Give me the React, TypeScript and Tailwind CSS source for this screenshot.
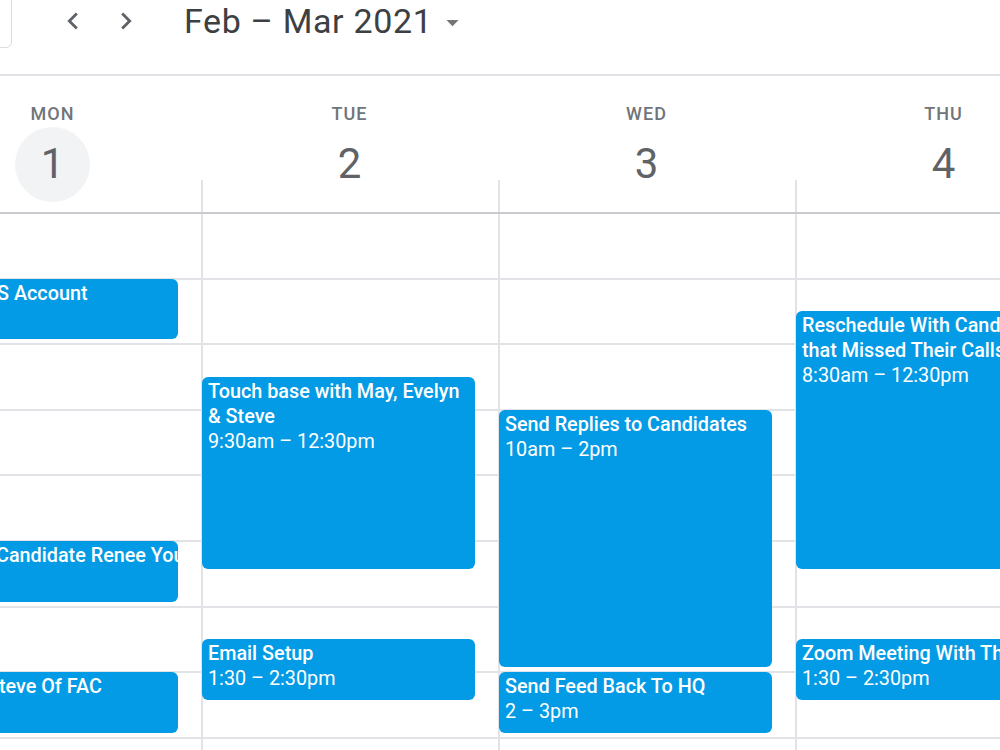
import React from "react";

type CalEvent = {
  title: string;
  time?: string;
  start: number;
  end: number;
  // Monday is cut off by the window, so its text is shifted to show the tail only
  indent?: string;
};

const HOUR = 65.6;
const FIRST_HOUR = 7;
const HOURS = 9;

const days: { label: string; date: number; today?: boolean; events: CalEvent[] }[] = [
  {
    label: "MON",
    date: 1,
    today: true,
    events: [
      { title: "S Account", start: 8, end: 9, indent: "pl-[92px]" },
      { title: "Candidate Renee Young", start: 12, end: 13, indent: "pl-[91px]" },
      { title: "Steve Of FAC", start: 14, end: 15, indent: "pl-[82px]" },
    ],
  },
  {
    label: "TUE",
    date: 2,
    events: [
      { title: "Touch base with May, Evelyn & Steve", time: "9:30am – 12:30pm", start: 9.5, end: 12.5 },
      { title: "Email Setup", time: "1:30 – 2:30pm", start: 13.5, end: 14.5 },
    ],
  },
  {
    label: "WED",
    date: 3,
    events: [
      { title: "Send Replies to Candidates", time: "10am – 2pm", start: 10, end: 14 },
      { title: "Send Feed Back To HQ", time: "2 – 3pm", start: 14, end: 15 },
    ],
  },
  {
    label: "THU",
    date: 4,
    events: [
      { title: "Reschedule With Candidates that Missed Their Calls", time: "8:30am – 12:30pm", start: 8.5, end: 12.5 },
      { title: "Zoom Meeting With The Team", time: "1:30 – 2:30pm", start: 13.5, end: 14.5 },
    ],
  },
];

function EventCard({ ev }: { ev: CalEvent }) {
  const short = ev.end - ev.start <= 1;
  return (
    <div
      className="absolute left-[-1px] w-[273px] rounded-[6px] bg-[#039be5] overflow-hidden text-white text-[19.8px] leading-[24.75px]"
      style={{
        top: (ev.start - FIRST_HOUR) * HOUR - 1,
        height: (ev.end - ev.start) * HOUR - 5,
      }}
    >
      <div className={`pr-[6px] pt-[3px] ${ev.indent ?? "pl-[6px]"}`}>
        <div className={`font-medium ${short ? "whitespace-nowrap" : ""}`}>{ev.title}</div>
        {ev.time && <div className="whitespace-nowrap">{ev.time}</div>}
      </div>
    </div>
  );
}

function DayColumn({ day }: { day: (typeof days)[number] }) {
  return (
    <div className="w-[297px] shrink-0 flex flex-col">
      {/* day header */}
      <div className="relative h-[138px] flex flex-col items-center pt-[28px] border-b-2 border-[#c9cace]">
        <span className="text-[18px] leading-[20px] font-medium tracking-[1px] text-[#70757a]">{day.label}</span>
        <div
          className={`mt-[3px] w-[75px] h-[75px] rounded-full flex items-center justify-center ${
            day.today ? "bg-[#f1f3f4]" : ""
          }`}
        >
          <span className="text-[42px] leading-[42px] text-[#5f6368] -mt-[2px]">{day.date}</span>
        </div>
        <div className="absolute left-0 bottom-0 h-[32px] w-[2px] bg-[#e2e3e7]" />
      </div>

      {/* hour grid */}
      <div className="relative border-l-2 border-[#e2e3e7]">
        {Array.from({ length: HOURS }).map((_, i) => (
          <div key={i} className="h-[65.6px] border-b-2 border-[#e2e3e7]" />
        ))}
        {day.events.map((ev) => (
          <EventCard key={ev.title} ev={ev} />
        ))}
      </div>
    </div>
  );
}

export default function App() {
  return (
    <div className="w-[1000px] h-[750px] overflow-hidden bg-white font-['Roboto','Liberation_Sans',sans-serif]">
      {/* toolbar */}
      <div className="h-[76px] flex items-start border-b-2 border-[#e0e1e5]">
        <div className="w-[100px] h-[58px] -mt-[10px] -ml-[88px] border border-[#dadce0] rounded-[6px] shrink-0" />
        <div className="flex items-center h-[42px] ml-[44px] gap-[19px] text-[#5f6368]">
          <svg width="34" height="34" viewBox="0 0 24 24" fill="currentColor">
            <path d="M15.41 7.41 14 6l-6 6 6 6 1.41-1.41L10.83 12z" />
          </svg>
          <svg width="34" height="34" viewBox="0 0 24 24" fill="currentColor">
            <path d="M10 6 8.59 7.41 13.17 12l-4.58 4.59L10 18l6-6z" />
          </svg>
        </div>
        <div className="flex items-center h-[42px] ml-[41px]">
          <span className="text-[34px] leading-[40px] tracking-[0.65px] text-[#3c4043]">Feb – Mar 2021</span>
          <svg className="ml-[6px] mt-[2px]" width="29" height="29" viewBox="0 0 24 24" fill="#757575">
            <path d="M7 10l5 5 5-5z" />
          </svg>
        </div>
      </div>

      {/* week */}
      <div className="flex -ml-[96px]">
        {days.map((d) => (
          <DayColumn key={d.label} day={d} />
        ))}
      </div>
    </div>
  );
}
